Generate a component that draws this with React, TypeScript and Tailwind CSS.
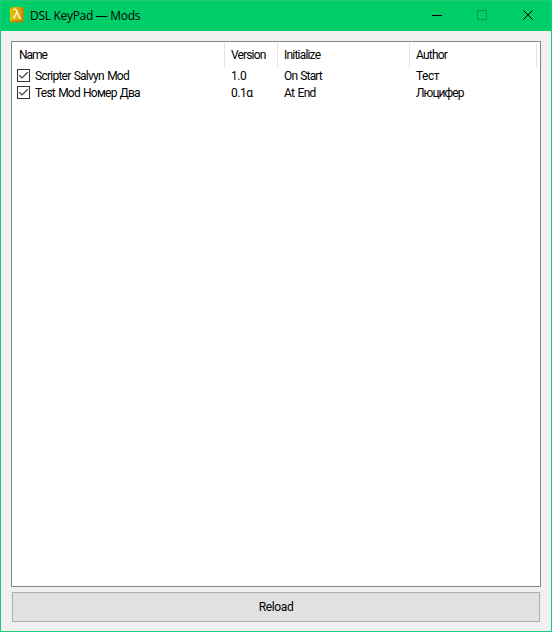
const mods = [
  {
    name: { text: 'Scripter Salvyn Mod', spacing: 'tracking-[-0.75px]' },
    version: '1.0',
    init: { text: 'On Start', spacing: 'tracking-[-0.85px]' },
    author: { text: 'Тест', spacing: 'tracking-[-0.5px]' },
  },
  {
    name: { text: 'Test Mod Номер Два', spacing: 'tracking-[-0.78px]' },
    version: '0.1α',
    init: { text: 'At End', spacing: 'tracking-[-0.7px]' },
    author: { text: 'Люцифер', spacing: 'tracking-[-0.95px]' },
  },
];

const columns = 'grid grid-cols-[213px_53px_132px_127px]';

function AppIcon() {
  return (
    <svg className="ml-[9px] h-4 w-4 shrink-0" viewBox="0 0 16 16">
      <defs>
        <linearGradient id="gold" x1="0" y1="0" x2="1" y2="0">
          <stop offset="0" stopColor="#e2c000" />
          <stop offset="0.7" stopColor="#dba60e" />
          <stop offset="1" stopColor="#ad850c" />
        </linearGradient>
      </defs>
      <rect x="0" y="0" width="14" height="15.5" rx="3" fill="url(#gold)" />
      <path d="M1.5 14.5h11" stroke="#b07a13" strokeWidth="1.6" />
      <path d="M3.6 2.3h1.5c.8 0 1 .4 1.4 1.4l2.6 6.4c.4.9.9 1 1.8.6M6.8 5.5 3.5 11.3" fill="none" stroke="#fff8df" strokeWidth="1.5" />
    </svg>
  );
}

function Checkbox() {
  return (
    <svg className="h-[13px] w-[13px] shrink-0" viewBox="0 0 13 13">
      <rect x="0.5" y="0.5" width="12" height="12" fill="white" stroke="#333" />
      <path d="M2.2 6.2 5 9l5.8-5.8" fill="none" stroke="#333" strokeWidth="1.2" />
    </svg>
  );
}

export default function App() {
  return (
    <div className="flex h-[632px] w-[552px] flex-col border border-[#1dc97a] bg-[#f0f0f0] font-[Roboto,'Noto_Sans',sans-serif] text-[12px] leading-[17px] text-black">
      <header className="flex h-[30px] shrink-0 items-center bg-[#00ce69] pb-[2px]">
        <AppIcon />
        <h1 className="ml-1 whitespace-nowrap font-['Open_Sans','Noto_Sans',sans-serif] tracking-[-0.3px]">DSL KeyPad — Mods</h1>
        <div className="ml-auto flex">
          {[
            <path key="min" d="M1 5.5h10" />,
            <path key="max" d="M.5.5h9v9h-9z" className="opacity-25" />,
            <path key="close" d="m.3.3 9.4 9.4M9.7.3.3 9.7" />,
          ].map((shape, i) => (
            <span key={i} className="flex w-[46px] justify-center">
              <svg width="10" height="10" viewBox="0 0 10 10" className="overflow-visible" fill="none" stroke="black">
                {shape}
              </svg>
            </span>
          ))}
        </div>
      </header>
      <main className="flex min-h-0 flex-1 flex-col px-[10px] pt-[10px] pb-[9px]">
        <section className="h-[546px] w-[530px] shrink-0 border border-[#828790] bg-white">
          <div className={`${columns} mt-px h-6 items-center`}>
            <span className="h-6 border-r border-[#e5e5e5] pl-[7px] leading-6 tracking-[-1px]">Name</span>
            <span className="h-6 border-r border-[#e5e5e5] pl-[6px] leading-6 tracking-[-0.85px]">Version</span>
            <span className="h-6 border-r border-[#e5e5e5] pl-[6px] leading-6 tracking-[-0.8px]">Initialize</span>
            <span className="h-6 border-r border-[#e5e5e5] pl-[6px] leading-6 tracking-[-0.8px]">Author</span>
          </div>
          {mods.map((mod) => (
            <div key={mod.name.text} className={`${columns} h-[17px] whitespace-nowrap leading-[19px] [word-spacing:1px]`}>
              <span className="flex h-[17px] items-center gap-[5px] pl-[5px]">
                <Checkbox />
                <span className={`pt-[2px] ${mod.name.spacing}`}>{mod.name.text}</span>
              </span>
              <span className="pl-[6px] tracking-[-0.5px]">{mod.version}</span>
              <span className={`pl-[6px] ${mod.init.spacing}`}>{mod.init.text}</span>
              <span className={`pl-[6px] ${mod.author.spacing}`}>{mod.author.text}</span>
            </div>
          ))}
        </section>
        <button className="mx-px mt-[5px] h-[30px] w-[528px] shrink-0 border border-[#adadad] bg-[#e1e1e1] tracking-[-0.35px]">Reload</button>
      </main>
    </div>
  );
}
